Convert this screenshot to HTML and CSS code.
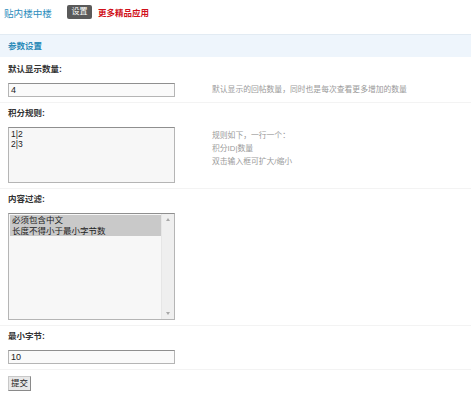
FILE: index.html
```html
<!DOCTYPE html>
<html lang="zh-CN">
<head>
<meta charset="utf-8">
<title>贴内楼中楼</title>
<link rel="stylesheet" href="styles.css">
</head>
<body>
<div class="topbar">
  <span class="app-title">贴内楼中楼</span>
  <span class="tab-btn">设置</span>
  <span class="more-link">更多精品应用</span>
</div>
<div class="panel-head">参数设置</div>
<form class="settings">
  <div class="row">
    <div class="label">默认显示数量:</div>
    <div class="line line-center">
      <div class="input">4</div>
      <div class="desc">默认显示的回帖数量，同时也是每次查看更多增加的数量</div>
    </div>
  </div>
  <div class="row">
    <div class="label">积分规则:</div>
    <div class="line">
      <div class="textarea">1|2<br>2|3</div>
      <div class="desc desc-multi">规则如下，一行一个：<br>积分ID|数量<br>双击输入框可扩大/缩小</div>
    </div>
  </div>
  <div class="row">
    <div class="label">内容过滤:</div>
    <div class="line">
      <div class="listbox">
        <div class="options">
          <div class="opt sel">必须包含中文</div>
          <div class="opt sel">长度不得小于最小字节数</div>
        </div>
        <div class="scrollbar">
          <span class="arrow up"></span>
          <span class="arrow down"></span>
        </div>
      </div>
    </div>
  </div>
  <div class="row">
    <div class="label">最小字节:</div>
    <div class="line">
      <div class="input">10</div>
    </div>
  </div>
  <div class="actions">
    <span class="submit">提交</span>
  </div>
</form>
</body>
</html>
```
FILE: styles.css
```css
html, body {
  margin: 0;
  padding: 0;
  background: #ffffff;
}
body {
  font-family: "Liberation Sans", "Noto Sans CJK SC", sans-serif;
  font-size: 8px;
  color: #333;
  width: 471px;
}
.topbar {
  display: flex;
  align-items: center;
  height: 24px;
  padding-left: 4px;
}
.app-title {
  font-size: 9.6px;
  color: #2b8cbc;
  width: 48px;
  margin-top: 1px;
}
.tab-btn {
  margin-left: 15px;
  background: #5a5a5a;
  color: #fff;
  font-size: 8px;
  width: 25px;
  height: 14px;
  line-height: 14px;
  text-align: center;
  border-radius: 2px;
}
.more-link {
  margin-left: 6px;
  color: #d0101a;
  font-weight: bold;
  font-size: 8.5px;
}
.panel-head {
  margin-top: 10px;
  height: 22px;
  line-height: 22px;
  background: #eef5fc;
  border-top: 1px solid #e2ebf3;
  color: #2a8ab8;
  font-weight: bold;
  font-size: 8.5px;
  padding-left: 8px;
}
.settings {
  margin: 2px 0 0;
}
.row {
  padding: 4px 8px 5px;
  border-bottom: 1px solid #f3f3f3;
}
.label {
  font-weight: bold;
  font-size: 8.5px;
  line-height: 12px;
  color: #333;
  margin-bottom: 8px;
}
.line {
  display: flex;
  align-items: flex-start;
}
.line-center {
  align-items: center;
}
.input {
  box-sizing: border-box;
  width: 167px;
  height: 14px;
  border: 1px solid #b5b5b5;
  border-top-color: #8f8f8f;
  background: #fafafa;
  font-size: 9px;
  line-height: 12px;
  padding-left: 2px;
  color: #222;
}
.textarea {
  box-sizing: border-box;
  width: 167px;
  height: 56px;
  border: 1px solid #b5b5b5;
  border-top-color: #8f8f8f;
  background: #f7f7f7;
  font-size: 8.5px;
  line-height: 9.5px;
  padding: 2px 2px;
  color: #222;
}
.desc {
  margin-left: 37px;
  color: #9a9a9a;
  font-size: 7.8px;
  line-height: 12px;
}
.desc-multi {
  margin-top: 2px;
  line-height: 13px;
}
.listbox {
  box-sizing: border-box;
  width: 167px;
  height: 107px;
  border: 1px solid #b5b5b5;
  border-top-color: #8f8f8f;
  background: #f7f7f7;
  display: flex;
}
.options {
  flex: 1;
  padding: 1px 0 0 1px;
}
.opt {
  font-size: 8.5px;
  line-height: 10.5px;
  padding-left: 2px;
  color: #222;
}
.opt.sel {
  background: #c9c9c9;
}
.scrollbar {
  width: 12px;
  background: #efefef;
  border-left: 1px solid #e6e6e6;
  display: flex;
  flex-direction: column;
  justify-content: space-between;
  align-items: center;
  padding: 4px 0;
}
.arrow {
  width: 0;
  height: 0;
  border-left: 2.5px solid transparent;
  border-right: 2.5px solid transparent;
}
.arrow.up {
  border-bottom: 3px solid #a8a8a8;
}
.arrow.down {
  border-top: 3px solid #a8a8a8;
}
.actions {
  padding: 6px 8px;
}
.submit {
  display: inline-block;
  box-sizing: border-box;
  width: 23px;
  height: 15px;
  line-height: 13px;
  text-align: center;
  font-size: 8.5px;
  color: #222;
  background: #e8e8e8;
  border: 1px solid #8a8a8a;
  border-top-color: #c8c8c8;
  border-left-color: #c8c8c8;
}
```
